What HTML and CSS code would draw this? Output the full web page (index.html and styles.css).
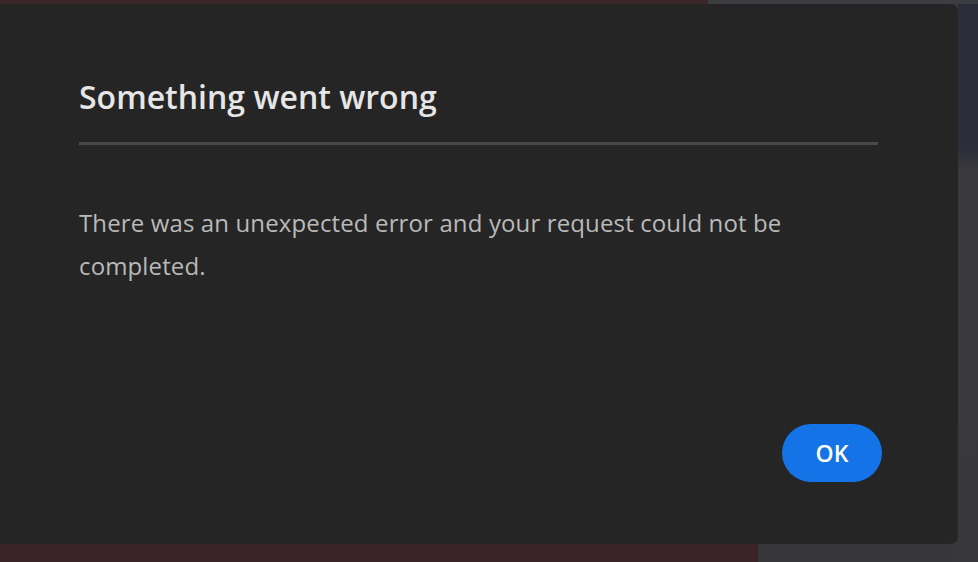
FILE: index.html
```html
<!DOCTYPE html>
<html lang="en">
<head>
<meta charset="utf-8">
<title>Something went wrong</title>
<link rel="stylesheet" href="styles.css">
</head>
<body>
<div class="backdrop">
  <section class="dialog" role="alertdialog" aria-labelledby="dlg-title">
    <h2 class="dialog-title" id="dlg-title">Something went wrong</h2>
    <hr class="dialog-divider">
    <p class="dialog-body">There was an unexpected error and your request could not be completed.</p>
    <div class="dialog-footer">
      <button class="btn-primary" type="button">OK</button>
    </div>
  </section>
</div>
</body>
</html>
```

FILE: styles.css
```css
html, body {
  margin: 0;
  padding: 0;
  width: 978px;
  height: 562px;
  overflow: hidden;
}

body {
  font-family: "Open Sans", "Noto Sans", sans-serif;
}

.backdrop {
  box-sizing: border-box;
  width: 978px;
  height: 562px;
  padding-top: 4px;
  background:
    linear-gradient(to right, #3a2528 0, #3a2528 708px, #3c3d40 708px, #3c3d40 100%) top / 100% 4px no-repeat,
    linear-gradient(to bottom, #2b2e3a 0, #2b2e3a 150px, #3a3a3d 170px, #38383b 100%) right / 20px 100% no-repeat,
    linear-gradient(to right, #3a2428 0, #3a2428 758px, #37373a 758px, #37373a 100%);
}

.dialog {
  box-sizing: border-box;
  width: 968px;
  height: 540px;
  margin-left: -10px;
  padding: 0 80px 0 89px;
  background: #252525;
  border-radius: 8px;
  display: flex;
  flex-direction: column;
}

.dialog-title {
  margin: 71px 0 0;
  font-size: 32px;
  font-weight: 600;
  line-height: 44px;
  color: #e6e6e6;
}

.dialog-divider {
  margin: 23px 0 0;
  border: 0;
  height: 3px;
  background: #4a4a4a;
}

.dialog-body {
  margin: 56px 0 0;
  font-size: 24px;
  letter-spacing: 0.13px;
  line-height: 43px;
  color: #b9b9b9;
  max-width: 740px;
}

.dialog-footer {
  margin-top: auto;
  margin-bottom: 62px;
  display: flex;
  justify-content: flex-end;
  margin-right: -4px;
}

.btn-primary {
  width: 100px;
  height: 58px;
  border: 0;
  border-radius: 29px;
  background: #1473e6;
  color: #ffffff;
  font-family: "Open Sans", "Noto Sans", sans-serif;
  font-size: 23px;
  font-weight: 600;
  cursor: pointer;
}
```
